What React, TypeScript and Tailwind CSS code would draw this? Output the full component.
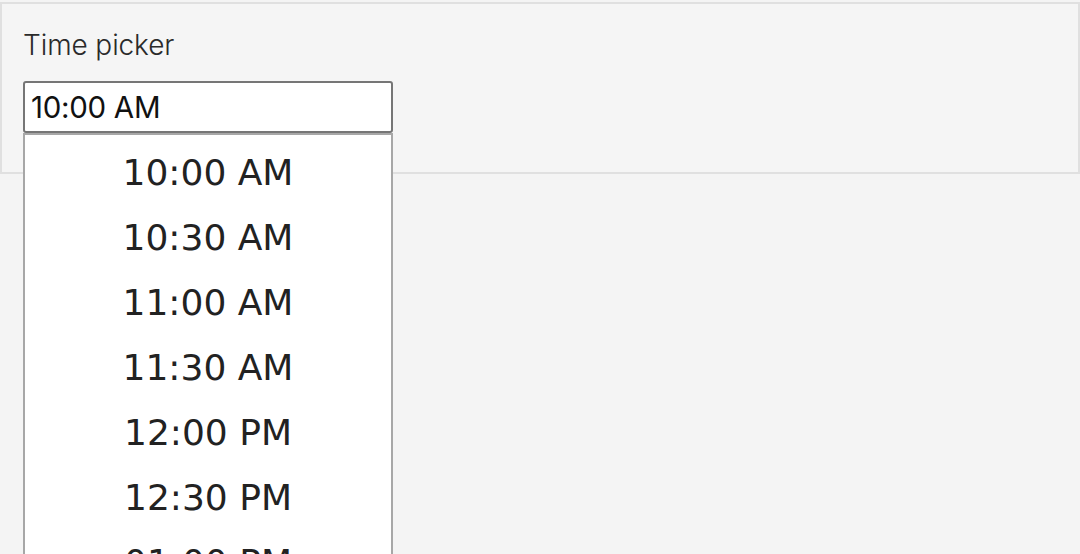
import React from 'react'

const times = ['10:00 AM', '10:30 AM', '11:00 AM', '11:30 AM', '12:00 PM', '12:30 PM', '01:00 PM', '01:30 PM']

export default function App(): JSX.Element {
    return (
        <div className="min-h-screen w-full bg-[#f4f4f4] pt-[2px] overflow-hidden">
            <div className="border-2 border-[#e0e0e0] bg-[#f5f5f5] px-[21px] pt-[22px] pb-[39px]">
                <label className="block text-[28px] leading-[39px] text-[#2a2a2a] font-['Inter','Noto_Sans',sans-serif] font-light tracking-[-0.1px]">
                    Time picker
                </label>
                <div className="relative mt-[16px] w-[370px]">
                    <div className="h-[52px] w-full rounded-[3px] border-2 border-[#767676] bg-white px-[6px] flex items-center text-[29.5px] text-[#111] font-['Inter','Noto_Sans',sans-serif] tracking-[-0.3px]">
                        10:00 AM
                    </div>
                    {/* open list of options */}
                    <div className="absolute left-0 top-[52px] z-10 w-full h-[440px] border-2 border-[#a7a7a7] bg-white pt-[5px] overflow-hidden">
                        {times.map((t) => (
                            <div
                                key={t}
                                className="h-[65px] flex items-center justify-center text-[36px] text-[#222] font-['DejaVu_Sans',sans-serif]"
                            >
                                {t}
                            </div>
                        ))}
                    </div>
                </div>
            </div>
        </div>
    )
}
